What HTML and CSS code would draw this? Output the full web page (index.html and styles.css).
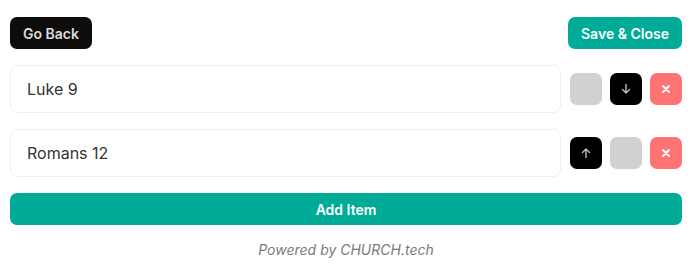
FILE: index.html
```html
<!DOCTYPE html>
<html>
<head>
<meta charset="utf-8">
<link rel="stylesheet" href="styles.css">
</head>
<body>
<div class="page">
  <div class="header">
    <button class="btn btn-dark">Go Back</button>
    <button class="btn btn-teal">Save &amp; Close</button>
  </div>
  <div class="row">
    <div class="field">Luke 9</div>
    <div class="actions">
      <button class="sq sq-gray"></button>
      <button class="sq sq-black"><svg width="12" height="12" viewBox="0 0 12 12"><path d="M6 1.5v8.5M2.5 6.5L6 10l3.5-3.5" fill="none" stroke="#bdbdbd" stroke-width="1.4" stroke-linecap="round" stroke-linejoin="round"/></svg></button>
      <button class="sq sq-red"><svg width="10" height="10" viewBox="0 0 10 10"><path d="M2 2l6 6M8 2l-6 6" stroke="#fff" stroke-width="2" stroke-linecap="round"/></svg></button>
    </div>
  </div>
  <div class="row">
    <div class="field">Romans 12</div>
    <div class="actions">
      <button class="sq sq-black"><svg width="12" height="12" viewBox="0 0 12 12"><path d="M6 10.5V2M2.5 5.5L6 2l3.5 3.5" fill="none" stroke="#bdbdbd" stroke-width="1.4" stroke-linecap="round" stroke-linejoin="round"/></svg></button>
      <button class="sq sq-gray"></button>
      <button class="sq sq-red"><svg width="10" height="10" viewBox="0 0 10 10"><path d="M2 2l6 6M8 2l-6 6" stroke="#fff" stroke-width="2" stroke-linecap="round"/></svg></button>
    </div>
  </div>
  <button class="btn btn-teal btn-wide">Add Item</button>
  <div class="footer">Powered by CHURCH.tech</div>
</div>
</body>
</html>
```
FILE: styles.css
```css
* { box-sizing: border-box; }
html, body { margin: 0; padding: 0; background: #fff; }
body { font-family: Inter, "Noto Sans", sans-serif; }
.page {
  padding: 17px 11px 0 10px;
  display: flex;
  flex-direction: column;
  gap: 16px;
}
.header {
  display: flex;
  justify-content: space-between;
  align-items: center;
}
.btn {
  height: 32px;
  border: none;
  border-radius: 7px;
  font-family: Inter, sans-serif;
  font-weight: 600;
  font-size: 14px;
  padding: 0 13px;
  cursor: pointer;
}
.btn-dark { background: #0f0d0c; color: #dcdcdc; width: 82px; }
.btn-teal { background: #00ab98; color: #fff; width: 114px; }
.btn-wide { width: 100%; }
.row {
  display: flex;
  align-items: center;
  gap: 9px;
}
.field {
  flex: 1;
  height: 48px;
  border: 1px solid #efefef;
  border-radius: 8px;
  padding: 0 16px;
  display: flex;
  align-items: center;
  font-size: 16px;
  color: #333;
}
.actions {
  display: flex;
  gap: 8px;
}
.sq {
  width: 32px;
  height: 32px;
  border: none;
  border-radius: 7px;
  padding: 0;
  display: flex;
  align-items: center;
  justify-content: center;
}
.sq-gray { background: #d1d1d1; }
.sq-black { background: #000; }
.sq-red { background: #ff7373; }
.footer {
  text-align: center;
  font-style: italic;
  font-size: 14px;
  color: #7a7a7a;
  margin-top: -1px;
  line-height: 20px;
}
```
